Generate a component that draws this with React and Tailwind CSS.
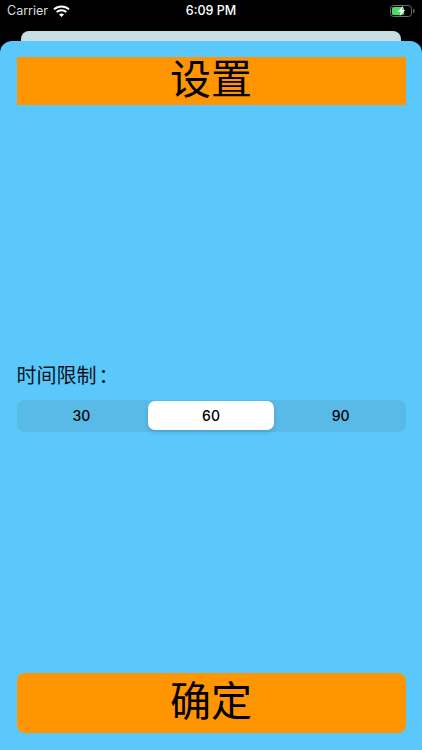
import React from 'react'

const FONT = '[font-family:"Liberation_Sans","Noto_Sans_CJK_SC",sans-serif]'
const UI_FONT = '[font-family:Inter,"Liberation_Sans",sans-serif]'

function Wifi() {
  return (
    <svg width="17" height="12" viewBox="0 0 17 12" fill="none" stroke="white" strokeWidth="2">
      <path d="M1 4.4C5.2 .4 11.8 .4 16 4.4" />
      <path d="M3.7 7.1C6.4 4.7 10.6 4.7 13.3 7.1" />
      <path d="M8.5 12 6 9.5C7.4 8.3 9.6 8.3 11 9.5Z" fill="white" stroke="none" />
    </svg>
  )
}

function Battery() {
  return (
    <svg width="25" height="12" viewBox="0 0 25 12">
      <rect x="0.5" y="0.5" width="21" height="11" rx="3" fill="none" stroke="#6b6b6b" />
      <rect x="2" y="2" width="12" height="8" rx="1.5" fill="#4cd964" />
      <path d="M13 .8 7.5 6.9h3.2L9.6 11.2l5.6-6.3h-3.2Z" fill="white" />
      <rect x="23" y="4" width="1.5" height="4" rx="0.7" fill="#6b6b6b" />
    </svg>
  )
}

export default function App() {
  return (
    <div className={`flex flex-col h-[750px] w-[422px] overflow-hidden bg-black ${FONT}`}>

      {/* Status bar */}
      <div className={`h-[22px] flex-shrink-0 grid grid-cols-3 items-center text-white text-[12.5px] pl-[7px] pr-[7px] ${UI_FONT}`}>
        <div className="flex items-center gap-[5px] text-[#dedede]">
          <span>Carrier</span>
          <Wifi />
        </div>
        <div className="text-center font-medium">6:09 PM</div>
        <div className="flex justify-end">
          <Battery />
        </div>
      </div>

      {/* Card behind the sheet */}
      <div className="h-[10px] mt-[9px] mx-[21px] flex-shrink-0 rounded-t-[8px] bg-[#c7dfe3]" />

      {/* Sheet */}
      <div className="flex-1 flex flex-col rounded-t-[12px] bg-[#5ac8fa] pl-[16.5px] pr-[16.5px] pt-[16px] pb-[17px]">
        <div className="h-[48px] flex-shrink-0 flex items-center justify-center bg-[#ff9500] text-[41px] text-black">
          设置
        </div>

        <div className="flex-1 pt-[259px]">
          <div className="h-[24px] leading-[24px] text-[20px] text-[#08131a]">
            时间限制<span className="ml-[2px]">：</span>
          </div>
          <div className={`mt-[12px] h-[32px] grid grid-cols-3 gap-[4px] items-center rounded-[8px] bg-[#59bae8] px-[2px] pt-[1px] pb-[2px] text-[14px] font-medium text-black ${UI_FONT}`}>
            <div className="text-center">30</div>
            <div className="h-[29px] flex items-center justify-center rounded-[7px] bg-white shadow-[0_2px_4px_rgba(0,0,0,0.15)]">60</div>
            <div className="text-center">90</div>
          </div>
        </div>

        <div className="h-[60px] flex-shrink-0 flex items-center justify-center rounded-[8px] bg-[#ff9500] text-[41px] text-black">
          确定
        </div>
      </div>
    </div>
  )
}
